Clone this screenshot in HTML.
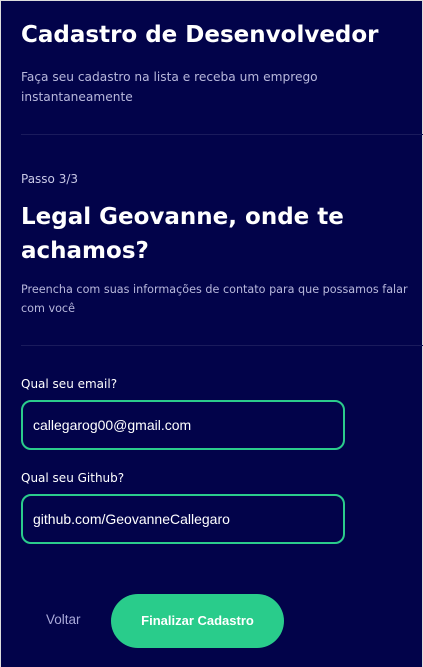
<!DOCTYPE html>
<html><head><meta charset="utf-8"><style>
html,body{margin:0;padding:0}
body{width:423px;height:667px;background:#02034a;font-family:"DejaVu Sans","Liberation Sans",sans-serif;position:relative;overflow:hidden;box-shadow:inset 1px 1px 0 #ddd,inset -1px 0 0 #ddd}
.a{position:absolute;left:21px;white-space:nowrap}
h1{margin:0;font-size:23px;font-weight:bold;color:#fff}
.sub{color:#b8b8dc;font-size:12.2px;line-height:20px}
.hr{position:absolute;left:21px;right:0;height:1px;background:#1a1b5c}
.in{position:absolute;left:21px;width:320px;height:46px;border:2px solid #2bcc8c;border-radius:10px;font-family:"Liberation Sans",Arial,sans-serif;color:#fff;font-size:14px;line-height:46px;text-indent:10px}
.lbl{color:#fff;font-size:12px}
</style></head><body>
<h1 class="a" style="top:22px">Cadastro de Desenvolvedor</h1>
<div class="a sub" style="top:67px">Faça seu cadastro na lista e receba um emprego<br>instantaneamente</div>
<div class="hr" style="top:134px"></div>
<div class="a sub" style="top:169px;font-size:12px;color:#c8c8e6">Passo 3/3</div>
<div class="a" style="top:200px;color:#fff;font-size:23px;font-weight:bold;line-height:34px">Legal Geovanne, onde te<br>achamos?</div>
<div class="a sub" style="top:280px;font-size:11.2px;line-height:19px">Preencha com suas informações de contato para que possamos falar<br>com você</div>
<div class="hr" style="top:345px"></div>
<div class="a lbl" style="top:377px">Qual seu email?</div>
<div class="in" style="top:400px">callegarog00@gmail.com</div>
<div class="a lbl" style="top:471px">Qual seu Github?</div>
<div class="in" style="top:494px">github.com/GeovanneCallegaro</div>
<div class="a" style="left:46px;top:612px;color:#a8a8d8;font-family:'Liberation Sans',Arial,sans-serif;font-size:13.5px">Voltar</div>
<div style="position:absolute;left:111px;top:594px;width:173px;height:54px;border-radius:27px;background:#29cc8b;color:#fff;font-family:'Liberation Sans',Arial,sans-serif;font-weight:bold;font-size:13px;text-align:center;line-height:54px">Finalizar Cadastro</div>
</body></html>
